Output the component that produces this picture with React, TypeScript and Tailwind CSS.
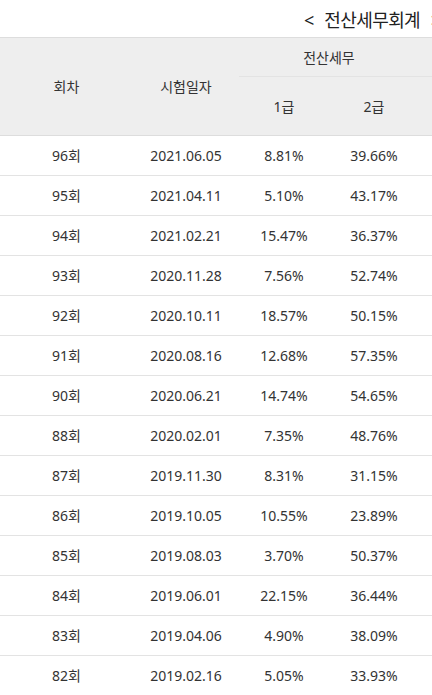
const rows: [string, string, string, string][] = [
  ["96회", "2021.06.05", "8.81%", "39.66%"],
  ["95회", "2021.04.11", "5.10%", "43.17%"],
  ["94회", "2021.02.21", "15.47%", "36.37%"],
  ["93회", "2020.11.28", "7.56%", "52.74%"],
  ["92회", "2020.10.11", "18.57%", "50.15%"],
  ["91회", "2020.08.16", "12.68%", "57.35%"],
  ["90회", "2020.06.21", "14.74%", "54.65%"],
  ["88회", "2020.02.01", "7.35%", "48.76%"],
  ["87회", "2019.11.30", "8.31%", "31.15%"],
  ["86회", "2019.10.05", "10.55%", "23.89%"],
  ["85회", "2019.08.03", "3.70%", "50.37%"],
  ["84회", "2019.06.01", "22.15%", "36.44%"],
  ["83회", "2019.04.06", "4.90%", "38.09%"],
  ["82회", "2019.02.16", "5.05%", "33.93%"],
];

export default function App() {
  return (
    <div
      className="w-[432px] h-[695px] overflow-hidden bg-white text-[#333]"
      style={{ fontFamily: '"Noto Sans", "Noto Sans CJK KR", sans-serif' }}
    >
      {/* title runs off the right edge, as in a wider centred header */}
      <div className="h-[37px] pl-[304px] pt-[3px] flex items-center whitespace-nowrap text-[18px] text-[#222]">
        <span>&lt;</span>
        <span className="ml-[10px] tracking-[-0.6px]">전산세무회계</span>
        <span className="ml-[11px]">&gt;</span>
      </div>

      <div className="h-[99px] flex bg-[#eeeeee] border-t border-b border-[#dddddd] text-[14px]">
        <div className="w-[133px] flex items-center justify-center">회차</div>
        <div className="w-[106px] flex items-center justify-center">시험일자</div>
        <div className="flex-1 flex flex-col">
          <div className="h-[39px] flex border-b border-[#e3e3e3]">
            <div className="w-[180px] flex items-center justify-center">전산세무</div>
          </div>
          <div className="flex-1 flex">
            <div className="w-[90px] flex items-center justify-center">1급</div>
            <div className="w-[90px] flex items-center justify-center">2급</div>
          </div>
        </div>
      </div>

      {rows.map((r) => (
        <div key={r[0]} className="h-10 flex border-b border-[#e3e3e3] text-[14px]">
          <div className="w-[133px] flex items-center justify-center">{r[0]}</div>
          <div className="w-[106px] flex items-center justify-center">{r[1]}</div>
          <div className="w-[90px] flex items-center justify-center">{r[2]}</div>
          <div className="w-[90px] flex items-center justify-center">{r[3]}</div>
        </div>
      ))}
    </div>
  );
}
